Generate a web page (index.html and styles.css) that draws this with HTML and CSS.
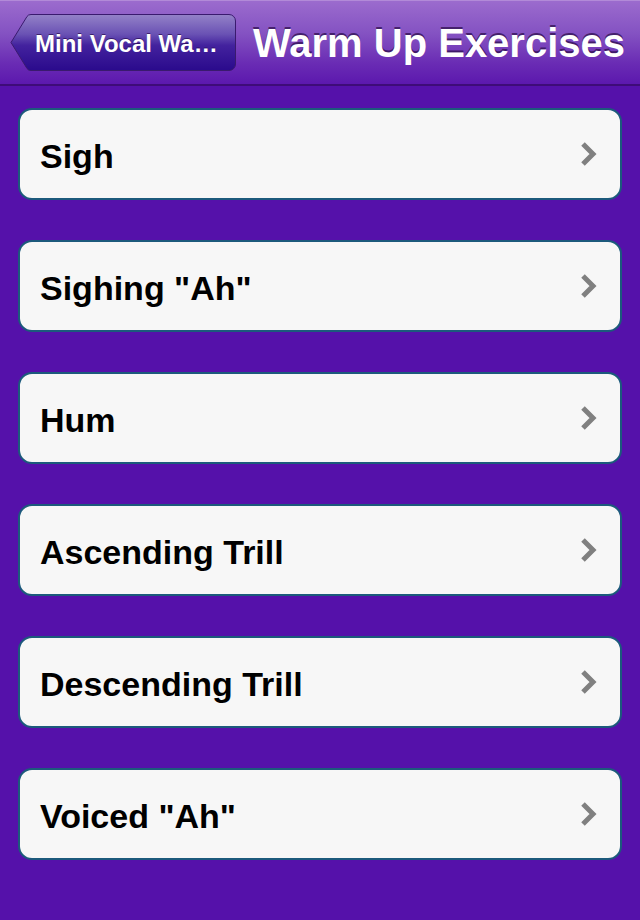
FILE: index.html
```html
<!DOCTYPE html>
<html>
<head>
<meta charset="utf-8">
<link rel="stylesheet" href="styles.css">
</head>
<body>
<div class="screen">
  <header class="navbar">
    <div class="back">
      <svg class="back-shape" width="226" height="57" viewBox="0 0 226 57">
        <defs>
          <linearGradient id="bg" x1="0" y1="0" x2="0" y2="1">
            <stop offset="0" stop-color="#9482c8"/>
            <stop offset="0.35" stop-color="#6a52b4"/>
            <stop offset="0.55" stop-color="#43229e"/>
            <stop offset="1" stop-color="#2a0a8c"/>
          </linearGradient>
        </defs>
        <path d="M1 28.5 L17 2.5 Q18.2 0.5 21 0.5 H219 A6.5 6.5 0 0 1 225.5 7 V50 A6.5 6.5 0 0 1 219 56.5 H21 Q18.2 56.5 17 54.5 Z" fill="url(#bg)" stroke="#3a1a6e" stroke-width="1"/>
      </svg>
      <span class="back-label">Mini Vocal Wa…</span>
    </div>
    <h1 class="title">Warm Up Exercises</h1>
  </header>
  <main class="list">
    <div class="row"><span class="label">Sigh</span><svg class="chev" width="18" height="26" viewBox="0 0 18 26"><polyline points="3,3 13,13 3,23" fill="none" stroke="#808080" stroke-width="5"/></svg></div>
    <div class="row"><span class="label">Sighing "Ah"</span><svg class="chev" width="18" height="26" viewBox="0 0 18 26"><polyline points="3,3 13,13 3,23" fill="none" stroke="#808080" stroke-width="5"/></svg></div>
    <div class="row"><span class="label">Hum</span><svg class="chev" width="18" height="26" viewBox="0 0 18 26"><polyline points="3,3 13,13 3,23" fill="none" stroke="#808080" stroke-width="5"/></svg></div>
    <div class="row"><span class="label">Ascending Trill</span><svg class="chev" width="18" height="26" viewBox="0 0 18 26"><polyline points="3,3 13,13 3,23" fill="none" stroke="#808080" stroke-width="5"/></svg></div>
    <div class="row"><span class="label">Descending Trill</span><svg class="chev" width="18" height="26" viewBox="0 0 18 26"><polyline points="3,3 13,13 3,23" fill="none" stroke="#808080" stroke-width="5"/></svg></div>
    <div class="row"><span class="label">Voiced "Ah"</span><svg class="chev" width="18" height="26" viewBox="0 0 18 26"><polyline points="3,3 13,13 3,23" fill="none" stroke="#808080" stroke-width="5"/></svg></div>
  </main>
</div>
</body>
</html>
```
FILE: styles.css
```css
html, body {
  margin: 0;
  padding: 0;
  background: #5511aa;
}
.screen {
  width: 640px;
  height: 920px;
  overflow: hidden;
  background: #5511aa;
  font-family: "Liberation Sans", Arial, sans-serif;
}
.navbar {
  height: 84px;
  border-bottom: 2px solid #3e0c78;
  box-shadow: inset 0 1px 0 #b28ad8;
  background: linear-gradient(to bottom, #9c6cce 0%, #8452c2 40%, #6a2cb4 75%, #5c18ae 100%);
  display: flex;
  align-items: center;
  padding-left: 10px;
  gap: 17px;
  box-sizing: content-box;
}
.back {
  position: relative;
  width: 226px;
  height: 57px;
  flex: none;
  display: flex;
  align-items: center;
  margin-top: 1px;
}
.back-shape {
  position: absolute;
  left: 0;
  top: 0;
}
.back-label {
  position: relative;
  padding-left: 25px;
  padding-top: 2px;
  color: #fff;
  font-weight: bold;
  font-size: 24px;
  text-shadow: 0 -1px 0 rgba(30, 0, 60, 0.6);
  white-space: nowrap;
}
.title {
  margin: 0;
  padding-top: 2px;
  color: #fff;
  font-weight: bold;
  font-size: 40px;
  white-space: nowrap;
  text-shadow: 0 -2px 0 rgba(40, 10, 70, 0.7);
}
.list {
  display: flex;
  flex-direction: column;
  gap: 40px;
  padding: 22px 18px 0 18px;
}
.row {
  height: 88px;
  border: 2px solid #1c5a7c;
  border-radius: 14px;
  background: #f7f7f7;
  display: flex;
  align-items: center;
  justify-content: space-between;
  padding: 0 22px 0 20px;
}
.label {
  font-weight: bold;
  font-size: 34px;
  padding-top: 4px;
  color: #000;
}
.chev {
  display: block;
}
```
